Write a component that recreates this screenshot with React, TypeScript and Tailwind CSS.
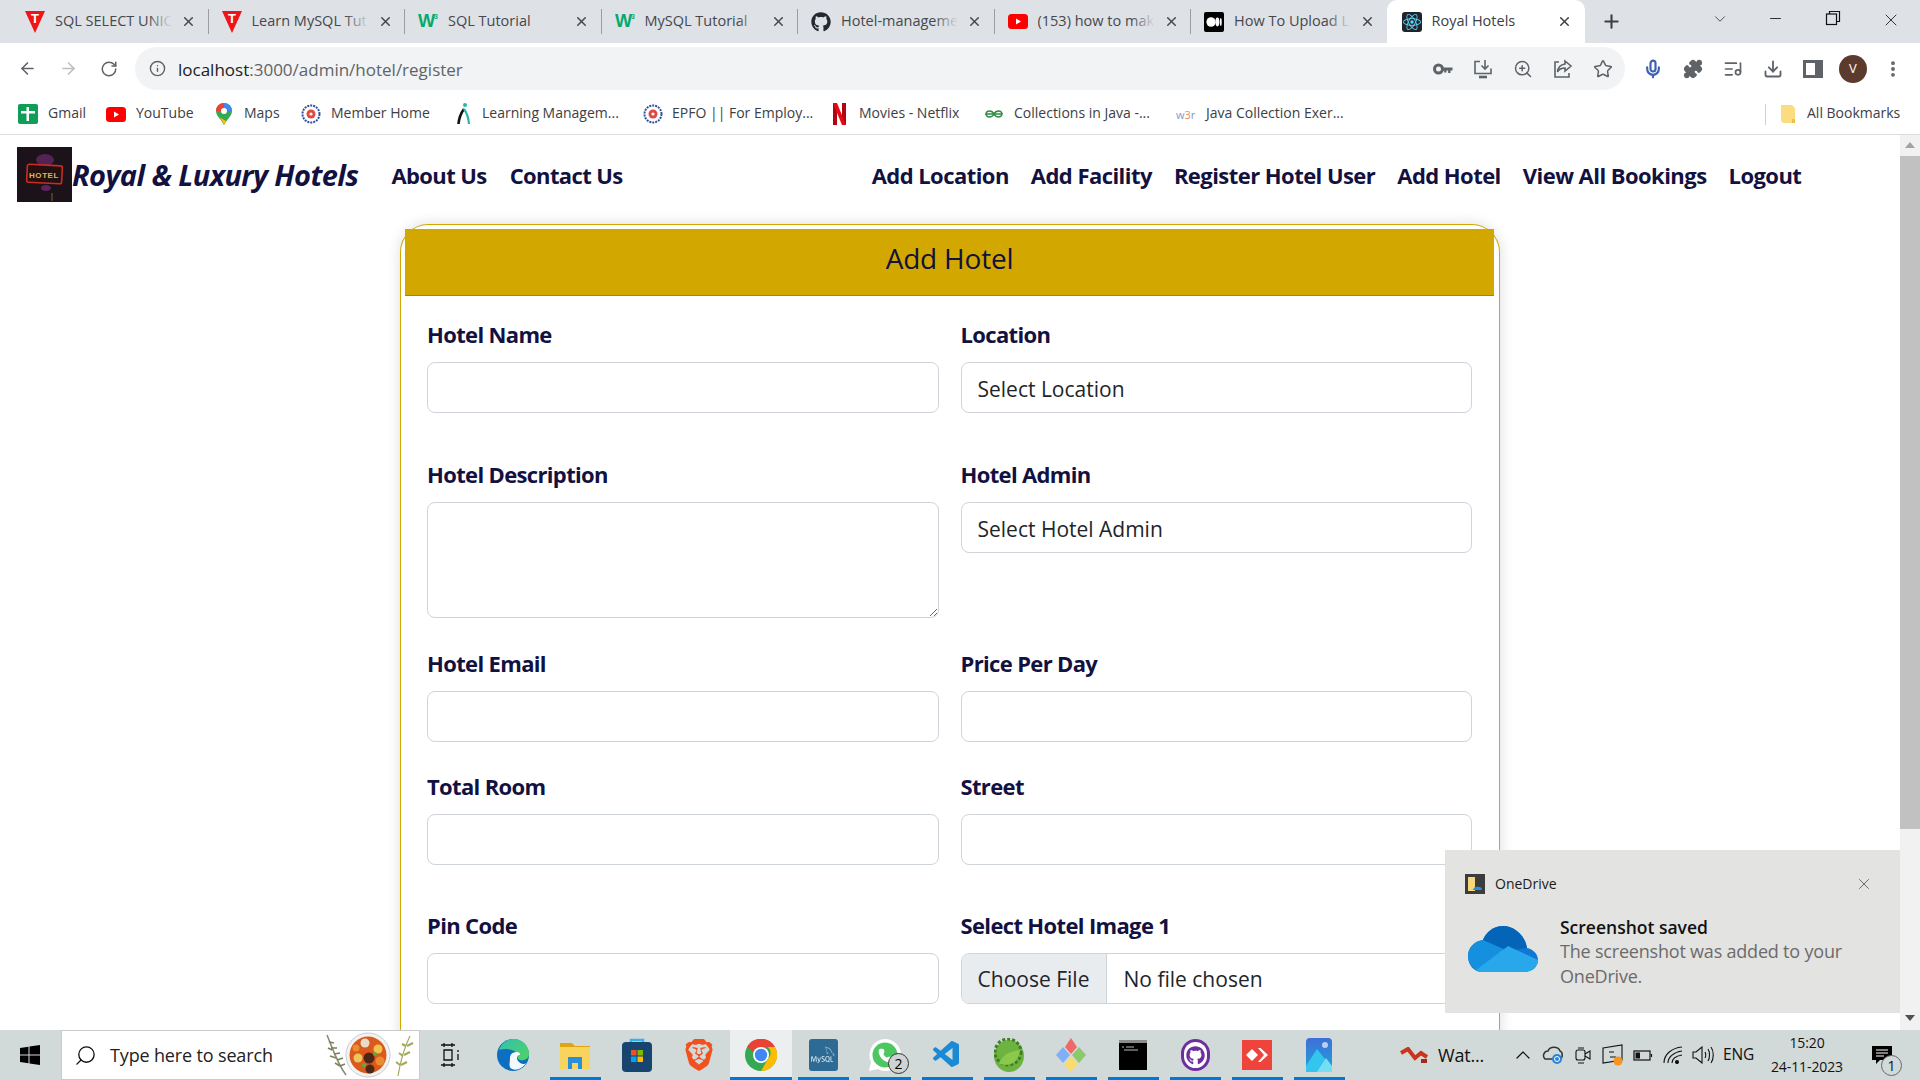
import React from "react";
import { ArrowLeft, ArrowRight, RotateCw, Info, ZoomIn, Star, Download, ListMusic, Puzzle, Mic, X, Plus, ChevronDown, Minus, Search, ChevronUp, EllipsisVertical, Phone } from "lucide-react";
import { SiBrave, SiMysql, SiReact } from "react-icons/si";
import { FaGithub } from "react-icons/fa";
import { VscVscode } from "react-icons/vsc";

const UI = "font-['Open_Sans','Noto_Sans',sans-serif]";

const Tee = () => (
  <svg width="20" height="22" viewBox="0 0 20 22"><polygon points="0,0 20,0 10,22" fill="#f01414" /><text x="10" y="12" fontSize="13" fontWeight="800" fill="#fff" textAnchor="middle" fontFamily="Liberation Sans">T</text></svg>
);
const W3 = () => (
  <svg width="22" height="20" viewBox="0 0 22 20"><text x="0" y="16" fontSize="20" fontWeight="800" fill="#04aa6d" fontFamily="Liberation Sans">W</text><text x="18" y="7" fontSize="7" fontWeight="700" fill="#04aa6d" fontFamily="Liberation Sans">3</text></svg>
);
const Yt = ({ w = 20, h = 15 }: { w?: number; h?: number }) => (
  <svg width={w} height={h} viewBox="0 0 20 15"><rect width="20" height="15" rx="3.5" fill="#f00" /><polygon points="8,4.5 8,10.5 13,7.5" fill="#fff" /></svg>
);
const Medium = () => (
  <svg width="20" height="20" viewBox="0 0 20 20"><rect width="20" height="20" rx="2" fill="#000" /><ellipse cx="7" cy="10" rx="4.6" ry="4.8" fill="#fff" /><ellipse cx="13.4" cy="10" rx="2" ry="4.4" fill="#fff" /><ellipse cx="16.8" cy="10" rx="0.9" ry="4" fill="#fff" /></svg>
);
const ReactFav = () => (
  <div className="w-5 h-5 rounded-[3px] bg-[#20232a] flex items-center justify-center"><SiReact size={18} color="#61dafb" /></div>
);

const tabs = [
  { t: "SQL SELECT UNIQ", i: <Tee /> },
  { t: "Learn MySQL Tut", i: <Tee /> },
  { t: "SQL Tutorial", i: <W3 /> },
  { t: "MySQL Tutorial", i: <W3 /> },
  { t: "Hotel-manageme", i: <FaGithub size={20} color="#24292f" /> },
  { t: "(153) how to mak", i: <Yt /> },
  { t: "How To Upload L", i: <Medium /> },
];

function Tab({ t, i, last }: { t: string; i: React.ReactNode; last: boolean }) {
  return (
    <div className="relative flex items-center h-[43px] w-[196.5px] shrink-0 pl-[13px]">
      <div className="w-5 flex justify-center shrink-0">{i}</div>
      <div className="relative ml-[10px] w-[117px] h-[22px] overflow-hidden whitespace-nowrap text-[14.5px] leading-[20px] text-[#45484c]">
        {t}
        <div className="absolute right-0 top-0 bottom-0 w-6 bg-linear-to-l from-[#dee1e6] to-transparent" />
      </div>
      <X size={15} strokeWidth={2.4} color="#45484c" className="ml-[9px] shrink-0" />
      {!last && <div className="absolute right-0 top-[9px] h-[25px] w-px bg-[#9a9da1]" />}
    </div>
  );
}

function TabStrip() {
  return (
    <div className={`flex h-[43px] bg-[#dee1e6] pl-[12px] items-end shrink-0 ${UI}`}>
      {tabs.map((x, n) => <Tab key={n} t={x.t} i={x.i} last={n === 6} />)}
      <div className="relative flex items-center h-[43px] w-[198px] -ml-[1px] shrink-0 bg-white rounded-t-[10px] pl-[15px]">
        <ReactFav />
        <span className="ml-[10px] w-[118px] h-[22px] text-[14.5px] leading-[20px] text-[#3c4043]">Royal Hotels</span>
        <X size={15} strokeWidth={2.4} color="#3c4043" className="ml-[7px]" />
      </div>
      <div className="flex items-center h-[43px] ml-[16px]"><Plus size={21} strokeWidth={2.4} color="#3c4043" /></div>
      <div className="flex items-start h-[43px] ml-auto pt-[10px]">
        <ChevronDown size={18} strokeWidth={1.2} color="#3c4043" className="mr-[38.5px]" />
        <Minus size={17} strokeWidth={1.2} color="#111" className="mr-[41px]" />
        <svg width="16" height="16" viewBox="0 0 16 16" fill="none" stroke="#111" strokeWidth="1.2" className="mr-[40px]"><rect x="1.5" y="4" width="10" height="10.5" /><path d="M4.5 4V1.5h10V11.5h-3" /></svg>
        <X size={20} strokeWidth={1} color="#111" className="mr-[19px]" />
      </div>
    </div>
  );
}

const G = "#5f6368";
function AddressBar() {
  return (
    <div className={`flex items-center h-[51px] bg-white shrink-0 ${UI}`}>
      <div className="flex items-center w-[135px] pl-[18px] gap-[22px]">
        <ArrowLeft size={19} color={G} />
        <ArrowRight size={19} color="#bcbec1" />
        <RotateCw size={18} color={G} />
      </div>
      <div className="flex items-center h-[43px] w-[1490px] rounded-full bg-[#f1f3f4] pl-[14px]">
        <Info size={17} color={G} />
        <span className="ml-[12px] pt-[2px] text-[17px] leading-none text-[#202124]">localhost<span className="text-[#5f6368]">:3000/admin/hotel/register</span></span>
        <div className="ml-auto flex items-center gap-[20px] pr-[12px]">
          <svg width="20" height="12" viewBox="0 0 20 12"><circle cx="5.5" cy="6" r="4" fill="none" stroke={G} strokeWidth="3" /><path d="M9 4.6h10.5v2.8h-2v2.6h-2.4V7.4h-1.6v2.2H11.2V7.4H9z" fill={G} /></svg>
          <svg width="20" height="20" viewBox="0 0 20 20" fill="none" stroke={G} strokeWidth="1.6"><path d="M7 2.5H2v12h16v-5" /><path d="M12 1v9m-3.5-3.5L12 10l3.500-3.500" /><path d="M6 18h8" strokeWidth="2.6" /></svg>
          <ZoomIn size={20} color={G} strokeWidth={1.8} />
          <svg width="20" height="20" viewBox="0 0 20 20" fill="none" stroke={G} strokeWidth="1.6"><path d="M6 3H2v15h14v-4" /><path d="M12 2l6 5-6 5V9c-4 0-6 1-7.500 4C5 8 8 5.500 12 5z" /></svg>
          <Star size={20} color={G} strokeWidth={1.8} />
        </div>
      </div>
      <div className="flex items-center pl-[18px] gap-[20px]">
        <Mic size={20} color="#3f63b0" strokeWidth={2.6} />
        <Puzzle size={20} color={G} fill={G} />
        <ListMusic size={20} color={G} />
        <Download size={20} color={G} strokeWidth={2.2} />
        <svg width="20" height="20" viewBox="0 0 20 20"><rect x="1.500" y="2.500" width="17" height="15" fill="none" stroke={G} strokeWidth="3" /><rect x="12" y="3" width="6" height="14" fill={G} /></svg>
        <div className="w-7 h-7 -mx-[4px] rounded-full bg-[#5d3a2e] text-white text-[13px] flex items-center justify-center">V</div>
        <EllipsisVertical size={20} color={G} strokeWidth={2.6} />
      </div>
    </div>
  );
}

const Gmail = () => (
  <svg width="20" height="20" viewBox="0 0 20 20"><rect width="20" height="20" rx="2" fill="#0f9d58" /><rect x="8.500" y="3" width="2.500" height="14" fill="#fff" /><rect x="3" y="7" width="14" height="2.500" fill="#fff" /></svg>
);
const Pin = () => (
  <svg width="16" height="22" viewBox="0 0 16 22"><path d="M8 0a8 8 0 0 1 8 8c0 5-5 8-8 14C5 16 0 13 0 8a8 8 0 0 1 8-8z" fill="#34a853" /><path d="M8 0a8 8 0 0 1 8 8L8 8z" fill="#4285f4" /><path d="M0 8a8 8 0 0 1 8-8v8z" fill="#ea4335" /><path d="M3 14c2 2 3 4 5 8l2-4z" fill="#fbbc04" /><circle cx="8" cy="8" r="3" fill="#fff" /></svg>
);
const Epfo = () => (
  <svg width="20" height="20" viewBox="0 0 20 20"><circle cx="10" cy="10" r="8.500" fill="#fff" stroke="#2c4f9e" strokeWidth="2" strokeDasharray="2 1" /><circle cx="10" cy="10" r="4.500" fill="#e2493f" /><circle cx="10" cy="10" r="1.600" fill="#fff" /></svg>
);
const Learn = () => (
  <svg width="14" height="24" viewBox="0 0 14 24" fill="none"><circle cx="8" cy="3" r="2" fill="#2bb5a8" /><path d="M7 7C4 11 2 16 1.500 22" stroke="#111" strokeWidth="2.600" /><path d="M7 7c3 4 4.500 9 5 15" stroke="#2bb5a8" strokeWidth="2.200" /></svg>
);
const Net = () => (
  <svg width="13" height="22" viewBox="0 0 13 22"><rect width="4" height="22" fill="#b1060f" /><rect x="9" width="4" height="22" fill="#b1060f" /><polygon points="0,0 4,0 13,22 9,22" fill="#e50914" /></svg>
);
const Gfg = () => (
  <svg width="18" height="10" viewBox="0 0 18 10" fill="none" stroke="#2f8d46" strokeWidth="1.500"><path d="M9 5H1c.5-4 6-4 8 0s7.500 4 8 0H9" /><path d="M9 5c-2 4-7.500 4-8 0M9 5c2-4 7.500-4 8 0" /></svg>
);
const marks = [
  { t: "Gmail", i: <Gmail />, w: 88, ic: 30 },
  { t: "YouTube", i: <Yt w={20} h={17} />, w: 110, ic: 30 },
  { t: "Maps", i: <Pin />, w: 85, ic: 28 },
  { t: "Member Home", i: <Epfo />, w: 156, ic: 30 },
  { t: "Learning Managem...", i: <Learn />, w: 186, ic: 25 },
  { t: "EPFO || For Employ...", i: <Epfo />, w: 190, ic: 29 },
  { t: "Movies - Netflix", i: <Net />, w: 152, ic: 26 },
  { t: "Collections in Java -...", i: <Gfg />, w: 191, ic: 29 },
  { t: "Java Collection Exer...", i: <span className="text-[11px] text-[#7a9bc9] leading-none">w<span className="text-[#e8895c]">3</span>r</span>, w: 589, ic: 30 },
];
function Bookmarks() {
  return (
    <div className={`flex items-center h-[41px] bg-white border-b border-[#dcdcdc] shrink-0 pl-[18px] ${UI}`}>
      {marks.map((m, n) => (
        <div key={n} className="flex items-center shrink-0" style={{ width: m.w }}>
          <div className="shrink-0 flex items-center" style={{ width: m.ic }}>{m.i}</div>
          <span className="pb-[2px] text-[14px] leading-none text-[#3c4043] whitespace-nowrap">{m.t}</span>
        </div>
      ))}
      <div className="h-[21px] w-px bg-[#d0d0d0]" />
      <svg width="16" height="20" viewBox="0 0 16 20" className="ml-[14px]"><path d="M1 1h11l3 3v15H3l-2-2z" fill="#fbdc80" /><rect x="12" y="15" width="3" height="4" fill="#f0c040" /></svg>
      <span className="ml-[11px] pb-[2px] text-[14px] leading-none text-[#3c4043] whitespace-nowrap">All Bookmarks</span>
    </div>
  );
}

const Logo = () => (
  <svg width="55" height="55" viewBox="0 0 55 55" className="shrink-0">
    <rect width="55" height="55" fill="#1c1219" />
    <ellipse cx="28" cy="13" rx="9" ry="6" fill="#6c2b70" opacity="0.7" />
    <rect x="10" y="18" width="35" height="18" rx="2" fill="#241010" stroke="#c92c20" strokeWidth="1.600" transform="rotate(3 27 27)" />
    <text x="27" y="30.500" fontSize="8" fontWeight="700" letterSpacing="0.6" fill="#d8b858" textAnchor="middle" fontFamily="Liberation Sans">HOTEL</text>
    <ellipse cx="29" cy="41" rx="5" ry="3" fill="#7a2c78" opacity="0.7" />
    <rect x="34" y="46" width="2" height="8" fill="#4d3b1f" />
  </svg>
);

const NAVY = "text-[#12113f]";
function Nav() {
  const right = ["Add Location", "Add Facility", "Register Hotel User", "Add Hotel", "View All Bookings", "Logout"];
  return (
    <div className={`flex items-center pl-[17px] pt-[12px] pb-[22px] ${NAVY}`}>
      <Logo />
      <span className="text-[29px] leading-none font-bold italic whitespace-nowrap tracking-[-0.6px]">Royal &amp; Luxury Hotels</span>
      <div className="flex gap-[23px] ml-[33px] text-[22px] leading-none font-bold whitespace-nowrap tracking-[-0.6px]">
        <span>About Us</span><span>Contact Us</span>
      </div>
      <div className="flex gap-[22px] ml-[249px] text-[22px] leading-none font-bold whitespace-nowrap tracking-[-0.55px]">
        {right.map(r => <span key={r}>{r}</span>)}
      </div>
    </div>
  );
}

const fieldBox = "block w-full border border-[#ced4da] rounded-[8px] bg-white outline-none";
function Label({ children }: { children: React.ReactNode }) {
  return <div className={`h-[34px] mb-[10px] text-[22px] leading-[32px] font-bold tracking-[-0.65px] ${NAVY}`}>{children}</div>;
}
function TextField({ label, mb }: { label: string; mb: string }) {
  return (
    <div className={mb}>
      <Label>{label}</Label>
      <input className={`${fieldBox} h-[51px]`} />
    </div>
  );
}
function SelectField({ label, text, mb }: { label: string; text: string; mb: string }) {
  return (
    <div className={mb}>
      <Label>{label}</Label>
      <select className={`${fieldBox} h-[51px] appearance-none pl-[16px] pt-[4px] text-[21px] text-[#212529]`}><option>{text}</option></select>
    </div>
  );
}

function Form() {
  return (
    <div className="mx-auto w-[1100px] border-[1.5px] border-b-0 border-[#d2a800] rounded-t-[28px] pl-[4px] pr-[5px] pt-[4px] shadow-[0_0_14px_rgba(0,0,0,0.14)] bg-white">
      <div className={`h-[67px] bg-[#d2a800] border-b border-[#a88700] flex justify-center pt-[10px] text-[28px] leading-[38px] tracking-[-0.2px] ${NAVY}`}>Add Hotel</div>
      <div className="grid grid-cols-2 gap-x-[22px] px-[22px] pt-[22px]">
        <TextField label="Hotel Name" mb="mb-[45px]" />
        <SelectField label="Location" text="Select Location" mb="mb-[45px]" />
        <div className="mb-[29px]">
          <Label>Hotel Description</Label>
          <textarea className={`${fieldBox} h-[116px]`} />
        </div>
        <SelectField label="Hotel Admin" text="Select Hotel Admin" mb="mb-[29px]" />
        <TextField label="Hotel Email" mb="mb-[27.5px]" />
        <TextField label="Price Per Day" mb="mb-[27.5px]" />
        <TextField label="Total Room" mb="mb-[44px]" />
        <TextField label="Street" mb="mb-[44px]" />
        <TextField label="Pin Code" mb="mb-[44px]" />
        <div className="mb-[44px]">
          <Label>Select Hotel Image 1</Label>
          <div className={`${fieldBox} h-[51px] flex items-center overflow-hidden text-[21px]`}>
            <div className="h-full w-[145px] shrink-0 bg-[#e9ecef] border-r border-[#ced4da] pt-[3px] flex items-center justify-center text-[#212529]">Choose File</div>
            <span className="ml-[17px] pt-[3px] text-[#212529]">No file chosen</span>
          </div>
        </div>
      </div>
    </div>
  );
}

function Scrollbar() {
  return (
    <div className="w-[20px] shrink-0 bg-[#f1f1f1] flex flex-col items-center">
      <svg width="10" height="6" viewBox="0 0 10 6" className="mt-[7px]"><polygon points="5,0 10,6 0,6" fill="#a3a3a3" /></svg>
      <div className="mt-[8px] w-full h-[673px] bg-[#c1c1c1]" />
      <svg width="10" height="6" viewBox="0 0 10 6" className="mt-auto mb-[9px]"><polygon points="0,0 10,0 5,6" fill="#505050" /></svg>
    </div>
  );
}

const OneDriveCloud = ({ w = 70, h = 46 }: { w?: number; h?: number }) => (
  <svg width={w} height={h} viewBox="0 0 70 46">
    <path d="M14 46h42c8 0 14-5 14-12 0-6-5-11-11-12C57 9 46 0 35 0 26 0 18 6 15 14 6 15 0 22 0 30c0 9 6 16 14 16z" fill="#0f78d4" />
    <path d="M35 0c11 0 22 9 24 22l-19 3-25-11C18 6 26 0 35 0z" fill="#0364b8" />
    <path d="M0 30c0-8 6-15 15-16l27 12L8 44C3 41 0 36 0 30z" fill="#1490df" />
    <path d="M8 44c2 1 4 2 6 2h42c8 0 14-5 14-12L40 20z" fill="#28a8ea" />
  </svg>
);

function Toast() {
  return (
    <div className={`absolute right-[20px] bottom-[17px] w-[455px] h-[163px] bg-[#e3e3e1] ${UI}`}>
      <div className="flex items-center pt-[24px] pl-[20px] pr-[27px]">
        <div className="w-5 h-5 bg-[#3c3c3c] flex items-center justify-center">
          <svg width="14" height="16" viewBox="0 0 14 16"><rect x="0" y="1" width="7" height="14" fill="#f6d77c" /><path d="M5 14c0-3 4-4 6-3 2 0 3 1 3 3z" fill="#2b8fe0" /></svg>
        </div>
        <span className="ml-[10px] text-[14px] leading-none text-[#1a1a1a]">OneDrive</span>
        <X size={18} strokeWidth={1} color="#444" className="ml-auto" />
      </div>
      <div className="flex pt-[21px] pl-[23px]">
        <div className="w-[92px] pt-[11px] shrink-0"><OneDriveCloud /></div>
        <div>
          <div className="text-[17.5px] leading-[24px] font-semibold text-[#111]">Screenshot saved</div>
          <div className="text-[18px] leading-[25px] text-[#6b6b6b] tracking-[-0.2px] w-[310px]">The screenshot was added to your OneDrive.</div>
        </div>
      </div>
    </div>
  );
}

const Edge = () => (
  <svg width="32" height="32" viewBox="0 0 32 32">
    <defs><linearGradient id="eg" x1="0" y1="0" x2="1" y2="1"><stop offset="0" stopColor="#35c1b0" /><stop offset="1" stopColor="#4fd35f" /></linearGradient></defs>
    <circle cx="16" cy="16" r="16" fill="#0c6fc0" />
    <path d="M2 11C5 3 12 0 17 0c9 0 15 7 15 15 0 5-5 7-9 6-3-1-3-4-2-6-3-5-13-6-19-4z" fill="url(#eg)" />
    <path d="M13 19c0-4 3-6 7-6 2 0 3 1 3 3-4-1-5 7 3 9 1 0 2 0 3-1-3 5-9 8-14 6-4-2-2-6-2-11z" fill="#fff" opacity="0.95" />
  </svg>
);
const Explorer = () => (
  <svg width="30" height="30" viewBox="0 0 30 30"><path d="M0 3h12l3 3h15v4H0z" fill="#e0a40e" /><rect y="7" width="30" height="22" fill="#f8d35e" /><rect x="8" y="17" width="14" height="12" fill="#2a8fd8" /><rect x="12" y="23" width="6" height="6" fill="#f8d35e" /></svg>
);
const Store = () => (
  <svg width="30" height="36" viewBox="0 0 30 36"><path d="M9 6V3h12v3" fill="none" stroke="#35b4e8" strokeWidth="2.500" /><rect y="5" width="30" height="30" rx="4" fill="#17456f" /><rect x="9" y="13" width="5.500" height="5.500" fill="#f25022" /><rect x="15.500" y="13" width="5.500" height="5.500" fill="#7fba00" /><rect x="9" y="19.500" width="5.500" height="5.500" fill="#00a4ef" /><rect x="15.500" y="19.500" width="5.500" height="5.500" fill="#ffb900" /></svg>
);
const Chrome = () => (
  <svg width="32" height="32" viewBox="0 0 32 32"><circle cx="16" cy="16" r="16" fill="#34a853" /><path d="M2 8a16 16 0 0 1 28 0H16a8 8 0 0 0-7.500 5z" fill="#ea4335" /><path d="M30 8a16 16 0 0 1-14 24l7-12a8 8 0 0 0 0-12z" fill="#fbbc04" /><circle cx="16" cy="16" r="8" fill="#fff" /><circle cx="16" cy="16" r="6.200" fill="#4285f4" /></svg>
);
const Wa = () => (
  <div className="relative w-[32px] h-[32px]">
    <svg width="32" height="32" viewBox="0 0 32 32"><path d="M16 0a16 16 0 0 1 0 32c-3 0-5-1-7-2l-9 2 2-9A16 16 0 0 1 16 0z" fill="#fff" /><circle cx="16" cy="16" r="12.500" fill="#4dc75f" /></svg>
    <Phone size={15} color="#fff" fill="#fff" className="absolute left-[8.500px] top-[8.500px]" />
    <div className="absolute -right-[8px] -bottom-[3px] w-[21px] h-[21px] rounded-full border border-[#333] bg-[#cfd3d3] flex items-center justify-center text-[14px] leading-none text-black">2</div>
  </div>
);
const Spring = () => (
  <svg width="30" height="34" viewBox="0 0 30 34"><ellipse cx="15" cy="18" rx="15" ry="16" fill="#6db33f" /><ellipse cx="14" cy="14" rx="13" ry="13" fill="none" stroke="#3f7d27" strokeWidth="3" strokeDasharray="3 2" /><path d="M5 26C9 15 18 13 26 12c-1 10-7 17-21 14z" fill="#8cc84b" /></svg>
);
const GitC = () => (
  <svg width="30" height="34" viewBox="0 0 30 34"><polygon points="15,0 21,9 15,16 9,9" fill="#f0686a" /><polygon points="7,9 14,17 7,25 0,17" fill="#7fb0f5" /><polygon points="23,9 30,17 23,25 16,17" fill="#8cc96d" /><polygon points="15,18 22,26 15,34 8,26" fill="#f9dc6f" /></svg>
);
const Cmd = () => (
  <svg width="28" height="30" viewBox="0 0 28 30"><rect width="28" height="30" fill="#000" /><rect width="28" height="3" fill="#8c8c8c" /><path d="M3 7h2M7 7h8M5 10h14" stroke="#bbb" strokeWidth="1" /></svg>
);
const GhD = () => (
  <div className="w-[29px] h-[32px] rounded-full bg-[#6e2ea0] flex items-center justify-center">
    <div className="w-[23px] h-[26px] rounded-full bg-white flex items-center justify-center"><FaGithub size={19} color="#6e2ea0" /></div>
  </div>
);
const Any = () => (
  <svg width="30" height="30" viewBox="0 0 30 30"><rect width="30" height="30" fill="#ef443b" /><polygon points="10,9 16,15 10,21 4,15" fill="#fff" /><polygon points="16,8 18.500,8 26,15 18.500,22 16,22 22,15" fill="#fff" /></svg>
);
const Photos = () => (
  <svg width="26" height="34" viewBox="0 0 26 34"><defs><linearGradient id="ph" x1="0" y1="0" x2="0" y2="1"><stop offset="0" stopColor="#3e6fd8" /><stop offset="1" stopColor="#1fa4d8" /></linearGradient></defs><rect width="26" height="34" rx="4" fill="url(#ph)" /><circle cx="19" cy="7" r="3" fill="#b7d0f5" /><polygon points="0,28 11,11 26,30 26,34 0,34" fill="#34c5ee" /><polygon points="11,34 20,20 26,28 26,34" fill="#74def5" /></svg>
);
const Win = () => (
  <svg width="20" height="20" viewBox="0 0 20 20" fill="#000"><polygon points="0,3 8.500,1.800 8.500,9.500 0,9.500" /><polygon points="9.500,1.600 20,0 20,9.500 9.500,9.500" /><polygon points="0,10.500 8.500,10.500 8.500,18.200 0,17" /><polygon points="9.500,10.500 20,10.500 20,20 9.500,18.400" /></svg>
);
const Food = () => (
  <svg width="90" height="46" viewBox="0 0 90 46" fill="none">
    <path d="M1 3c5 12 10 28 19 40" stroke="#8a8a6a" strokeWidth="1.500" />
    <path d="M3 10l5 1M5 16l6 0M8 22l6-1M11 28l6-2M14 34l5-2M2 16l4 2M4 24l6 2M9 31l5 3" stroke="#79805c" strokeWidth="1.500" />
    <circle cx="42" cy="23" r="22" fill="#f2f2f2" stroke="#ccc" />
    <circle cx="42" cy="23" r="18.500" fill="#d95a1c" />
    <circle cx="39" cy="11" r="4.500" fill="#e8dcc8" />
    <circle cx="52" cy="17" r="4.500" fill="#f2c14e" />
    <circle cx="43" cy="26" r="5.500" fill="#4c2618" />
    <circle cx="32" cy="26" r="4.500" fill="#f0c45c" />
    <circle cx="30" cy="16" r="3.500" fill="#ee8a2f" />
    <circle cx="54" cy="29" r="4.500" fill="#ee8a2f" />
    <circle cx="44" cy="37" r="4.500" fill="#4c2618" />
    <circle cx="38" cy="33" r="2.200" fill="#69a53b" />
    <circle cx="49" cy="22" r="2" fill="#69a53b" />
    <path d="M72 44c2-12 6-28 12-40" stroke="#a7a85c" strokeWidth="1.200" />
    <path d="M74 33l-4-3M75 33l6-3M77 24l-4-3M78 23l6-3M80 14l-4-2M81 14l6-3" stroke="#a5a955" strokeWidth="2" />
  </svg>
);

const apps = [
  { i: <Edge /> , u: false },
  { i: <Explorer />, u: true },
  { i: <Store />, u: false },
  { i: <SiBrave size={32} color="#f0511f" />, u: false },
  { i: <Chrome />, u: true, a: true },
  { i: <div className="w-[29px] h-[32px] rounded-[3px] bg-[#2d6a94] flex items-center justify-center"><SiMysql size={24} color="#d5e6f0" /></div>, u: true },
  { i: <Wa />, u: true },
  { i: <VscVscode size={32} color="#1b8ad6" />, u: true },
  { i: <Spring />, u: true },
  { i: <GitC />, u: true },
  { i: <Cmd />, u: true },
  { i: <GhD />, u: true },
  { i: <Any />, u: true },
  { i: <Photos />, u: true },
];

function Taskbar() {
  return (
    <div className={`flex items-stretch h-[50px] shrink-0 bg-[#d2d9d9] ${UI}`}>
      <div className="w-[61px] pr-[2px] flex items-center justify-center"><Win /></div>
      <div className="flex items-center w-[359px] bg-white border border-[#c7cccc] pl-[12px]">
        <Search size={23} strokeWidth={1.4} color="#111" className="-scale-x-100" />
        <span className="ml-[13px] text-[18px] leading-none text-[#222] tracking-[-0.15px]">Type here to search</span>
        <div className="ml-auto mr-[3px]"><Food /></div>
      </div>
      <div className="w-[62px] flex items-center justify-center">
        <svg width="20" height="24" viewBox="0 0 20 24" fill="none" stroke="#111" strokeWidth="1.300"><path d="M0 2h14M0 22h14M3 7h8v10H3zM3 0v4M11 0v4M3 20v4M11 20v4M17 7v2M17 11v6" /></svg>
      </div>
      {apps.map((a, n) => (
        <div key={n} className={`relative w-[62px] flex items-center justify-center ${a.a ? "bg-[#ecefef]" : ""}`}>
          {a.i}
          {a.u && <div className={`absolute bottom-0 h-[3px] bg-[#0078d7] ${a.a ? "left-0 right-0" : "left-[5.500px] w-[51px]"}`} />}
        </div>
      ))}
      <div className="flex items-center ml-[50px] text-[#111]">
        <svg width="28" height="16" viewBox="0 0 28 16" fill="none" stroke="#c8351c" strokeWidth="4"><path d="M1 6l7-4 7 9 6-5 6 4" /><path d="M21 14h6" stroke="#a32a15" /></svg>
        <span className="ml-[10px] text-[18px] leading-none tracking-[-0.2px]">Wat...</span>
        <ChevronUp size={24} strokeWidth={1.2} color="#111" className="ml-[27px]" />
        <svg width="22" height="20" viewBox="0 0 22 20" className="ml-[7px]"><path d="M3 14c-3-3-1-8 3-8 2-5 10-5 12 0 3 1 3 7 0 8z" fill="none" stroke="#333" strokeWidth="1.500" /><circle cx="15" cy="14" r="5" fill="#2b83d8" /><circle cx="15" cy="14" r="2.500" fill="none" stroke="#fff" strokeWidth="1" /></svg>
        <svg width="16" height="20" viewBox="0 0 16 20" fill="none" stroke="#111" strokeWidth="1.100" className="ml-[11px]"><rect x="1" y="5" width="9" height="10" rx="2" /><path d="M10 9l5-3v8l-5-3M3 3h6M3 18h6" /></svg>
        <svg width="22" height="22" viewBox="0 0 22 22" className="ml-[11px]"><path d="M1 4l19-3v15L1 19z" fill="none" stroke="#111" strokeWidth="1.100" /><path d="M7 8h5M14 13H8" stroke="#111" strokeWidth="1" /><circle cx="16" cy="17" r="4.500" fill="#f7931e" /></svg>
        <svg width="20" height="11" viewBox="0 0 20 11" fill="none" stroke="#111" strokeWidth="1.200" className="ml-[9px]"><rect x="1" y="1" width="16" height="9" /><rect x="2.500" y="2.500" width="4.500" height="6" fill="#111" stroke="none" /><path d="M18.500 4v3" /></svg>
        <svg width="20" height="18" viewBox="0 0 20 18" fill="none" stroke="#111" strokeWidth="1.100" className="ml-[10px]"><path d="M1 17C1 8 9 2 19 1M5 17c0-6 6-11 14-12M9 17c0-4 4-7 10-8" /><circle cx="14" cy="16" r="1.500" fill="#111" /></svg>
        <svg width="22" height="18" viewBox="0 0 22 18" fill="none" stroke="#111" strokeWidth="1.100" className="ml-[9px]"><path d="M1 6h3l6-5v16l-6-5H1zM13 6c1 2 1 4 0 6M16 3c2 3 2 9 0 12M19 1c3 4 3 12 0 16" /></svg>
        <span className="ml-[9px] text-[15.500px] leading-none tracking-[-0.2px]">ENG</span>
        <div className="ml-[15px] w-[76px] flex flex-col items-center text-[14px] leading-[24px] tracking-[-0.1px] whitespace-nowrap"><span>15:20</span><span>24-11-2023</span></div>
        <div className="relative ml-[27px]">
          <svg width="20" height="18" viewBox="0 0 20 18"><path d="M0 0h20v14H8l-4 4v-4H0z" fill="#000" /><path d="M4 4h12M4 7h12M4 10h8" stroke="#fff" strokeWidth="1" /></svg>
          <div className="absolute -right-[10px] top-[9px] w-[21px] h-[21px] rounded-full border border-[#666] flex items-center justify-center bg-[#d2d9d9] text-[14px] leading-none">1</div>
        </div>
      </div>
    </div>
  );
}

export default function App() {
  return (
    <div className="flex flex-col h-screen w-[1920px] overflow-hidden bg-white font-['Open_Sans',sans-serif]">
      <TabStrip />
      <AddressBar />
      <Bookmarks />
      <div className="relative flex flex-1 min-h-0">
        <div className="flex-1 min-w-0 overflow-hidden">
          <Nav />
          <Form />
        </div>
        <Scrollbar />
        <Toast />
      </div>
      <Taskbar />
    </div>
  );
}
